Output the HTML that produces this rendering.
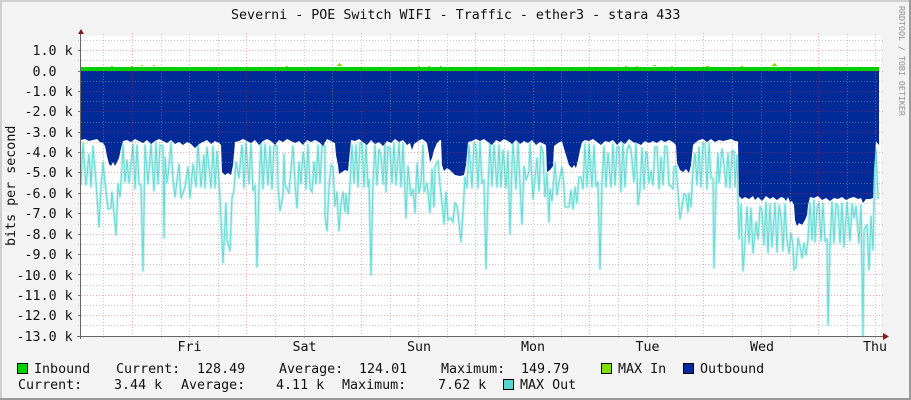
<!DOCTYPE html>
<html><head><meta charset="utf-8"><title>Severni - POE Switch WIFI - Traffic - ether3 - stara 433</title>
<style>html,body{margin:0;padding:0;background:#f3f3f3;width:911px;height:400px;overflow:hidden}svg{display:block}text{font-family:"DejaVu Sans Mono","Liberation Mono",monospace;font-size:13.33px;fill:#111}</style></head><body>
<svg width="911" height="400" viewBox="0 0 911 400" xmlns="http://www.w3.org/2000/svg">
<rect width="911" height="400" fill="#f3f3f3"/>
<path d="M0 1H911M1 0V400" stroke="#cfcfcf" stroke-width="2"/>
<path d="M0 399H911M910 0V400" stroke="#9a9a9a" stroke-width="2"/>
<rect x="81" y="36" width="800" height="300" fill="#fff"/>
<polyline fill="none" stroke="#c6f3f0" stroke-width="3" stroke-linejoin="round" points="81,185 83,143 86,185 89,154 91,187 93,146 96,182 99,227 101,187 103,162 105,182 108,209 111,208 112,192 113,202 116,235 118,184 120,197 122,167 123,145 125,182 127,160 129,183 133,144 135,189 137,145 139,184 141,185 143,271 145,145 148,184 151,144 154,191 156,143 158,184 160,145 163,146 164,238 165,157 167,183 169,167 171,143 173,180 175,197 179,164 181,198 185,187 188,167 190,198 193,164 196,187 198,144 201,187 204,155 205,188 207,147 211,188 213,146 215,188 217,151 220,198 223,263 226,203 227,240 230,251 232,198 234,190 236,162 239,178 242,145 244,188 246,143 249,184 251,144 253,191 255,185 257,267 259,189 261,143 263,189 265,144 268,185 270,146 272,189 274,146 277,146 278,186 280,211 283,195 284,154 285,185 289,193 293,146 295,183 297,208 299,162 301,184 303,152 305,167 306,189 308,144 310,188 312,192 314,162 316,184 318,145 320,183 322,146 325,146 325,216 327,231 329,187 331,165 333,167 335,206 337,192 339,231 341,204 343,192 345,212 346,194 348,214 350,185 352,145 354,183 356,145 358,187 360,143 362,143 364,187 366,144 368,187 369,179 371,275 373,183 375,145 377,185 379,149 381,156 383,184 385,144 386,192 388,147 390,148 392,183 394,143 396,185 399,143 401,187 403,143 406,218 408,166 411,196 413,189 415,213 417,163 419,193 421,183 423,145 424,192 427,183 430,213 432,169 434,207 435,167 438,161 440,185 442,202 444,224 446,192 448,220 451,218 453,222 455,203 457,206 458,213 461,242 463,212 465,177 467,188 469,145 472,188 474,143 476,145 478,188 480,142 482,183 484,180 486,269 488,187 490,143 492,186 494,145 497,187 499,145 501,187 503,150 506,188 508,151 510,234 512,163 513,143 516,189 518,143 520,183 522,224 524,166 526,180 529,172 530,143 533,199 537,158 539,191 541,146 543,153 545,197 547,173 549,222 550,189 552,201 555,163 557,195 559,182 562,167 564,187 565,207 569,207 571,190 573,209 575,187 577,203 579,177 581,177 583,189 585,144 587,187 589,144 592,187 594,145 596,186 598,182 600,269 602,183 604,146 606,187 608,153 611,187 613,144 615,185 617,147 619,147 621,192 623,142 625,187 627,150 629,145 631,150 634,182 636,143 638,205 640,190 642,148 644,189 646,152 647,153 649,183 651,171 653,185 655,147 657,147 659,189 661,157 663,185 665,146 667,147 669,185 671,186 673,189 674,167 676,166 678,192 680,219 682,207 684,194 686,195 688,212 689,193 691,207 693,169 695,153 697,185 699,147 701,187 703,143 705,144 707,189 709,143 711,178 713,178 714,268 716,188 718,153 719,183 722,149 724,165 726,187 728,153 730,188 732,151 734,151 735,187 737,155 739,239 741,204 743,271 745,242 747,207 749,243 751,208 753,253 754,243 756,222 758,239 760,207 762,210 764,245 766,202 768,253 770,204 772,247 775,203 777,252 779,205 781,217 783,251 785,204 787,240 789,253 791,233 793,245 794,270 796,267 798,238 800,246 802,258 804,243 806,255 808,240 810,203 812,240 814,200 815,242 817,208 819,203 821,241 823,203 825,241 827,239 828,325 830,246 832,202 834,243 836,204 838,206 840,243 842,203 844,247 847,202 850,241 852,204 854,218 856,206 857,219 859,243 861,205 863,336 864,230 867,225 869,270 871,216 873,250 874,203 875,158 876,149 878,198 879,198"/>
<polyline fill="none" stroke="#6cdcd8" stroke-width="1.1" stroke-linejoin="miter" points="81,185 83,143 86,185 89,154 91,187 93,146 96,182 99,227 101,187 103,162 105,182 108,209 111,208 112,192 113,202 116,235 118,184 120,197 122,167 123,145 125,182 127,160 129,183 133,144 135,189 137,145 139,184 141,185 143,271 145,145 148,184 151,144 154,191 156,143 158,184 160,145 163,146 164,238 165,157 167,183 169,167 171,143 173,180 175,197 179,164 181,198 185,187 188,167 190,198 193,164 196,187 198,144 201,187 204,155 205,188 207,147 211,188 213,146 215,188 217,151 220,198 223,263 226,203 227,240 230,251 232,198 234,190 236,162 239,178 242,145 244,188 246,143 249,184 251,144 253,191 255,185 257,267 259,189 261,143 263,189 265,144 268,185 270,146 272,189 274,146 277,146 278,186 280,211 283,195 284,154 285,185 289,193 293,146 295,183 297,208 299,162 301,184 303,152 305,167 306,189 308,144 310,188 312,192 314,162 316,184 318,145 320,183 322,146 325,146 325,216 327,231 329,187 331,165 333,167 335,206 337,192 339,231 341,204 343,192 345,212 346,194 348,214 350,185 352,145 354,183 356,145 358,187 360,143 362,143 364,187 366,144 368,187 369,179 371,275 373,183 375,145 377,185 379,149 381,156 383,184 385,144 386,192 388,147 390,148 392,183 394,143 396,185 399,143 401,187 403,143 406,218 408,166 411,196 413,189 415,213 417,163 419,193 421,183 423,145 424,192 427,183 430,213 432,169 434,207 435,167 438,161 440,185 442,202 444,224 446,192 448,220 451,218 453,222 455,203 457,206 458,213 461,242 463,212 465,177 467,188 469,145 472,188 474,143 476,145 478,188 480,142 482,183 484,180 486,269 488,187 490,143 492,186 494,145 497,187 499,145 501,187 503,150 506,188 508,151 510,234 512,163 513,143 516,189 518,143 520,183 522,224 524,166 526,180 529,172 530,143 533,199 537,158 539,191 541,146 543,153 545,197 547,173 549,222 550,189 552,201 555,163 557,195 559,182 562,167 564,187 565,207 569,207 571,190 573,209 575,187 577,203 579,177 581,177 583,189 585,144 587,187 589,144 592,187 594,145 596,186 598,182 600,269 602,183 604,146 606,187 608,153 611,187 613,144 615,185 617,147 619,147 621,192 623,142 625,187 627,150 629,145 631,150 634,182 636,143 638,205 640,190 642,148 644,189 646,152 647,153 649,183 651,171 653,185 655,147 657,147 659,189 661,157 663,185 665,146 667,147 669,185 671,186 673,189 674,167 676,166 678,192 680,219 682,207 684,194 686,195 688,212 689,193 691,207 693,169 695,153 697,185 699,147 701,187 703,143 705,144 707,189 709,143 711,178 713,178 714,268 716,188 718,153 719,183 722,149 724,165 726,187 728,153 730,188 732,151 734,151 735,187 737,155 739,239 741,204 743,271 745,242 747,207 749,243 751,208 753,253 754,243 756,222 758,239 760,207 762,210 764,245 766,202 768,253 770,204 772,247 775,203 777,252 779,205 781,217 783,251 785,204 787,240 789,253 791,233 793,245 794,270 796,267 798,238 800,246 802,258 804,243 806,255 808,240 810,203 812,240 814,200 815,242 817,208 819,203 821,241 823,203 825,241 827,239 828,325 830,246 832,202 834,243 836,204 838,206 840,243 842,203 844,247 847,202 850,241 852,204 854,218 856,206 857,219 859,243 861,205 863,336 864,230 867,225 869,270 871,216 873,250 874,203 875,158 876,149 878,198 879,198"/>
<polygon fill="#002a97" points="81,71 81,140 85,139 89,141 93,140 97,139 100,142 103,143 105,146 107,156 109,164 111,166 113,162 115,166 117,162 119,158 121,148 123,141 127,140 131,142 135,139 139,141 143,143 147,140 151,144 155,141 159,139 163,141 167,143 171,140 175,144 179,142 183,145 187,142 191,144 195,148 199,144 203,142 207,140 211,144 215,141 219,143 221,145 222,172 225,175 228,173 231,175 233,165 235,142 239,141 243,139 247,141 251,143 255,140 259,145 263,141 267,139 271,141 275,145 279,140 283,142 287,139 291,141 295,143 299,141 303,145 307,140 311,142 315,140 319,142 323,146 327,139 331,141 335,143 336,155 338,165 339,174 342,172 345,170 348,171 350,150 351,140 355,141 359,139 363,142 367,145 371,140 375,144 379,142 383,146 387,141 391,143 395,139 399,142 403,140 407,145 410,143 412,150 414,144 418,141 422,139 425,141 427,143 429,155 430,162 432,158 434,150 437,143 440,140 441,140 442,165 444,171 447,168 450,170 452,172 455,175 460,176 464,175 466,165 468,142 472,141 476,139 480,141 484,139 488,142 492,145 496,140 500,142 504,139 508,141 512,144 516,140 520,144 524,141 528,143 532,140 536,145 540,142 544,144 546,145 547,172 550,170 553,166 554,146 558,143 562,141 563,145 566,155 569,165 572,168 574,165 576,168 578,160 580,150 582,142 585,140 589,141 593,139 597,142 601,145 605,141 609,142 613,140 617,145 621,141 625,144 629,139 633,142 637,143 641,145 645,141 649,143 653,141 657,143 661,140 665,142 669,140 673,142 676,145 677,163 680,170 683,172 686,169 689,173 691,165 693,145 696,142 699,140 703,139 707,142 711,139 715,142 719,140 723,141 727,140 731,139 735,141 737,141 738,142 739,196 742,199 745,197 749,199 753,196 755,200 758,197 762,201 766,196 770,199 773,197 777,200 781,197 784,198 786,201 788,197 790,202 792,201 794,205 795,220 797,226 799,223 802,225 805,220 807,215 808,205 810,197 814,198 818,196 822,200 826,198 830,201 834,198 838,199 842,197 846,200 850,198 854,197 858,199 861,198 863,203 866,199 870,199 873,198 874,170 876,141 878,144 879,145 879,71"/>
<rect x="81" y="67" width="798" height="4" fill="#00cf00"/>
<path d="M84 67.5h1M111 66.5h2M131 66.5h2M141 65.5h2M153 65.5h2M286 66.5h2M337 65.5h5M338 64.5h3M339 63.5h1M418 66.5h2M428 66.5h2M440 66.5h2M625 66.5h2M636 66.5h2M653 65.5h3M671 66.5h2M706 66.5h3M741 66.5h2M772 65.5h5M773 64.5h3M774 63.5h1" stroke="#7ce000" stroke-width="1"/>
<path stroke="#999" stroke-opacity=".55" stroke-dasharray="1 2" d="M78 40.5H884M78 60.5H884M78 81.5H884M78 101.5H884M78 122.5H884M78 142.5H884M78 162.5H884M78 183.5H884M78 203.5H884M78 224.5H884M78 244.5H884M78 264.5H884M78 285.5H884M78 305.5H884M78 325.5H884M103.5 34V339M161.5 34V339M189.5 34V339M218.5 34V339M275.5 34V339M304.5 34V339M332.5 34V339M390.5 34V339M418.5 34V339M447.5 34V339M504.5 34V339M533.5 34V339M561.5 34V339M618.5 34V339M647.5 34V339M675.5 34V339M732.5 34V339M761.5 34V339M790.5 34V339M847.5 34V339M875.5 34V339"/>
<path stroke="#e53030" stroke-opacity=".4" stroke-dasharray="1 2" d="M78 50.5H884M78 71.5H884M78 91.5H884M78 111.5H884M78 132.5H884M78 152.5H884M78 172.5H884M78 193.5H884M78 213.5H884M78 234.5H884M78 254.5H884M78 274.5H884M78 295.5H884M78 315.5H884M132.5 33V339M246.5 33V339M361.5 33V339M475.5 33V339M589.5 33V339M703.5 33V339M818.5 33V339"/>
<path stroke="#777" d="M78 50.5h3M78 71.5h3M78 91.5h3M78 111.5h3M78 132.5h3M78 152.5h3M78 172.5h3M78 193.5h3M78 213.5h3M78 234.5h3M78 254.5h3M78 274.5h3M78 295.5h3M78 315.5h3"/>
<path stroke="#666" d="M80.5 33V339M77 336.5H884"/>
<path fill="#7f1d1d" d="M78 34L81 29L84 34ZM883 333L889 336.5L883 340Z"/>
<text x="231" y="19">Severni - POE Switch WIFI - Traffic - ether3 - stara 433</text>
<text x="32.5" y="55">1.0 k</text><text x="32.5" y="76">0.0</text>
<text x="24.5" y="96">-1.0 k</text><text x="24.5" y="116">-2.0 k</text><text x="24.5" y="137">-3.0 k</text><text x="24.5" y="157">-4.0 k</text><text x="24.5" y="177">-5.0 k</text><text x="24.5" y="198">-6.0 k</text><text x="24.5" y="218">-7.0 k</text><text x="24.5" y="239">-8.0 k</text><text x="24.5" y="259">-9.0 k</text>
<text x="16.5" y="280">-10.0 k</text><text x="16.5" y="300">-11.0 k</text><text x="16.5" y="320">-12.0 k</text><text x="16.5" y="341">-13.0 k</text>
<text transform="translate(15,246) rotate(-90)">bits per second</text>
<text transform="translate(899,6) rotate(90)" style="font-size:8.3px;fill:#8f8f8f">RRDTOOL / TOBI OETIKER</text>
<g text-anchor="middle"><text x="189.5" y="351">Fri</text><text x="304.5" y="351">Sat</text><text x="419" y="351">Sun</text><text x="533" y="351">Mon</text><text x="647.5" y="351">Tue</text><text x="762" y="351">Wed</text><text x="875" y="351">Thu</text></g>
<g stroke="#000"><rect x="17.5" y="363.5" width="10" height="10" fill="#00cf00"/><rect x="601.5" y="363.5" width="10" height="10" fill="#7ce000"/><rect x="683.5" y="363.5" width="10" height="10" fill="#002a97"/><rect x="503.5" y="379.5" width="10" height="10" fill="#55d6d3"/></g>
<text x="34" y="373">Inbound</text><text x="116" y="373">Current:</text><text x="197" y="373">128.49</text><text x="279" y="373">Average:</text><text x="359" y="373">124.01</text><text x="441" y="373">Maximum:</text><text x="521" y="373">149.79</text><text x="618" y="373">MAX In</text><text x="700" y="373">Outbound</text>
<text x="18" y="389">Current:</text><text x="114" y="389">3.44 k</text><text x="181" y="389">Average:</text><text x="276" y="389">4.11 k</text><text x="342" y="389">Maximum:</text><text x="438" y="389">7.62 k</text><text x="520" y="389">MAX Out</text>
</svg>
</body></html>
